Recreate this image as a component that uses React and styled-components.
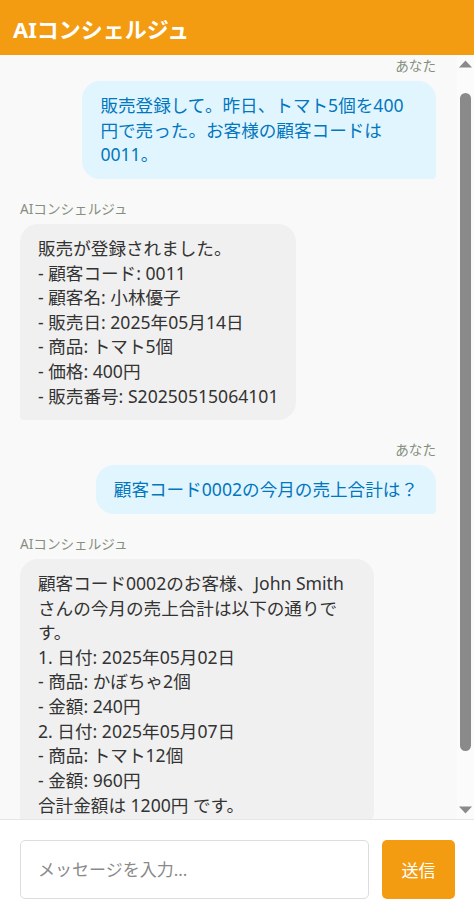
import { useEffect, useRef } from "react";
import styled, { createGlobalStyle, css } from "styled-components";

const messages = [
  {
    id: 0,
    sender: "user",
    text: "販売登録して。昨日、トマト5個を400円で売った。お客様の顧客コードは0011。",
  },
  {
    id: 1,
    sender: "ai",
    text:
      "販売が登録されました。\n- 顧客コード: 0011\n- 顧客名: 小林優子\n- 販売日: 2025年05月14日\n- 商品: トマト5個\n- 価格: 400円\n- 販売番号: S20250515064101",
  },
  {
    id: 2,
    sender: "user",
    text: "顧客コード0002の今月の売上合計は？",
  },
  {
    id: 3,
    sender: "ai",
    text:
      "顧客コード0002のお客様、John Smithさんの今月の売上合計は以下の通りです。\n1. 日付: 2025年05月02日\n- 商品: かぼちゃ2個\n- 金額: 240円\n2. 日付: 2025年05月07日\n- 商品: トマト12個\n- 金額: 960円\n合計金額は 1200円 です。",
  },
];

const senderName = { user: "あなた", ai: "AIコンシェルジュ" };

const Arrow = ({ down }) => (
  <svg width="17" height="17" viewBox="0 0 17 17">
    <polygon
      points={down ? "2,4.5 15,4.5 8.5,11.5" : "2,12.5 15,12.5 8.5,5.5"}
      fill="#8a8a8a"
    />
  </svg>
);

const ChatApp = () => {
  const listRef = useRef(null);

  useEffect(() => {
    // the reference is scrolled down a little
    if (listRef.current) listRef.current.scrollTop = 17;
  }, []);

  return (
    <>
      <GlobalStyle />
      <Page>
        <Header>AIコンシェルジュ</Header>
        <ChatBody>
          <MessageList ref={listRef}>
            {messages.map((m) => (
              <Message key={m.id} $mine={m.sender === "user"}>
                <Sender>{senderName[m.sender]}</Sender>
                <Bubble $mine={m.sender === "user"}>{m.text}</Bubble>
              </Message>
            ))}
          </MessageList>
          <ScrollRail>
            <RailButton>
              <Arrow />
            </RailButton>
            <RailTrack>
              <RailThumb />
            </RailTrack>
            <RailButton>
              <Arrow down />
            </RailButton>
          </ScrollRail>
        </ChatBody>
        <InputBar>
          <TextInput placeholder="メッセージを入力..." />
          <SendButton>送信</SendButton>
        </InputBar>
      </Page>
    </>
  );
};

const GlobalStyle = createGlobalStyle`
  body {
    margin: 0;
    font-family: "Noto Sans", "Noto Sans CJK JP", sans-serif;
  }
  * {
    box-sizing: border-box;
  }
`;

const Page = styled.div`
  height: 100vh;
  display: flex;
  flex-direction: column;
  background: #ffffff;
`;

const Header = styled.header`
  height: 55px;
  flex-shrink: 0;
  display: flex;
  align-items: center;
  padding: 0 13px;
  background: #f39c12;
  color: #ffffff;
  font-size: 22px;
  font-weight: 700;
`;

const ChatBody = styled.div`
  flex: 1;
  min-height: 0;
  display: flex;
  background: #f9f9f9;
`;

const MessageList = styled.div`
  flex: 1;
  min-width: 0;
  overflow: hidden;
  padding: 20px 21px 60px 20px;
  display: flex;
  flex-direction: column;
  gap: 22px;
`;

const ScrollRail = styled.div`
  width: 17px;
  flex-shrink: 0;
  display: flex;
  flex-direction: column;
  background: #fbfbfb;
`;

const RailButton = styled.div`
  height: 17px;
  display: flex;
  svg {
    display: block;
  }
`;

const RailTrack = styled.div`
  flex: 1;
  padding: 21px 3px 51px 3px;
  display: flex;
`;

const RailThumb = styled.div`
  flex: 1;
  background: #8a8a8a;
  border-radius: 6px;
`;

const Message = styled.div`
  display: flex;
  flex-direction: column;
  align-items: ${(p) => (p.$mine ? "flex-end" : "flex-start")};
  flex-shrink: 0;
`;

const Sender = styled.div`
  font-size: 13.6px;
  line-height: 16px;
  color: #858f7d;
  margin-bottom: 7px;
`;

const Bubble = styled.div`
  max-width: 85%;
  padding: 12px 18px;
  border-radius: 18px;
  font-size: 17.6px;
  line-height: 1.4;
  white-space: pre-wrap;
  word-break: break-word;

  ${(p) =>
    p.$mine
      ? css`
          background: #e1f5fe;
          color: #0277bd;
          border-bottom-right-radius: 4px;
        `
      : css`
          background: #f0f0f0;
          color: #333333;
          border-bottom-left-radius: 4px;
        `}
`;

const InputBar = styled.div`
  flex-shrink: 0;
  display: flex;
  gap: 13px;
  padding: 20px 19px 16px 20px;
  border-top: 1px solid #e6e6e6;
  background: #ffffff;
`;

const TextInput = styled.input`
  flex: 1;
  height: 59px;
  padding: 0 17px;
  border: 1px solid #dddddd;
  border-radius: 5px;
  font-family: inherit;
  font-size: 17px;
  color: #333333;
  outline: none;

  &::placeholder {
    color: #8a8a8a;
  }
`;

const SendButton = styled.button`
  width: 73px;
  height: 59px;
  border: none;
  border-radius: 5px;
  background: #f39c12;
  color: #ffffff;
  font-family: inherit;
  font-size: 17px;
  cursor: pointer;
`;

export default ChatApp;
